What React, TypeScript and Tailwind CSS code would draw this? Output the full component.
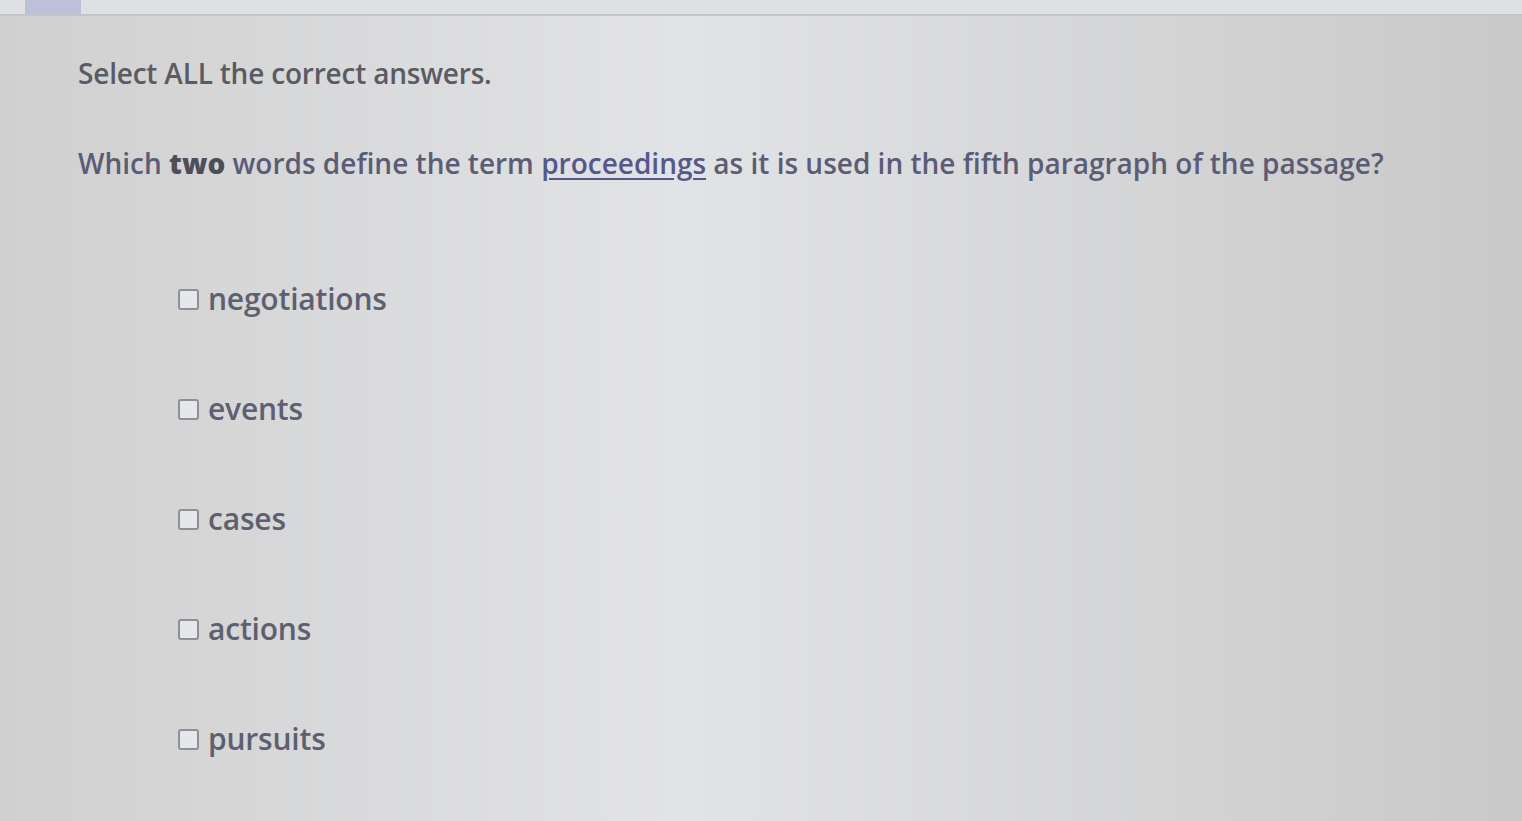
import React from 'react';

const options = ['negotiations', 'events', 'cases', 'actions', 'pursuits'];

const App: React.FC = () => {
  return (
    <div className="h-[821px] w-full overflow-hidden bg-linear-to-r from-[#d0d0d0] via-[#e2e3e6] via-45% to-[#c9c9c9] font-['Open_Sans',sans-serif]">
      {/* top strip with the active tab */}
      <div className="flex h-[16px] items-start border-b-2 border-[#c4c5c8] bg-[#dfe0e3]">
        <div className="ml-[25px] h-[14px] w-[56px] bg-[#bcc0d8]" />
      </div>

      <div className="pl-[78px] pt-[40px]">
        <p className="text-[28px] leading-[34px] font-semibold tracking-[-0.2px] text-[#5a5b63]">
          Select ALL the correct answers.
        </p>

        <p className="mt-[56px] text-[28px] leading-[34px] font-semibold text-[#5b5c75]">
          Which <span className="font-extrabold text-[#4e4e58]">two</span> words define the term{' '}
          <span className="text-[#56588a] underline underline-offset-4">proceedings</span> as it is
          used in the fifth paragraph of the passage?
        </p>

        <ul className="mt-[100px] ml-[100px] flex flex-col gap-[72px]">
          {options.map((label) => (
            <li key={label} className="flex h-[38px] items-center gap-[9px]">
              <span className="h-[21px] w-[21px] shrink-0 rounded-[3px] border-2 border-[#8e8f99] bg-[#e6e7ea]" />
              <span className="text-[30px] leading-[38px] font-semibold tracking-[-0.2px] text-[#5e6070]">
                {label}
              </span>
            </li>
          ))}
        </ul>
      </div>
    </div>
  );
};

export default App;
